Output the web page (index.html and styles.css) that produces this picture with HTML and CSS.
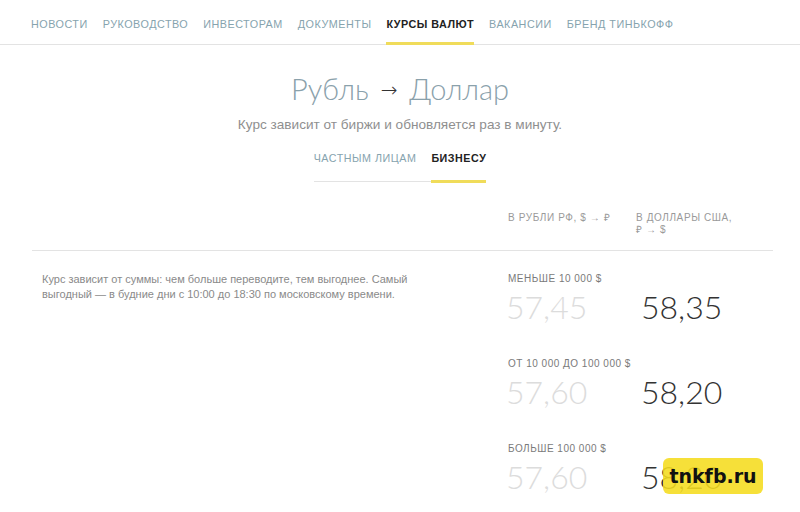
FILE: index.html
```html
<!DOCTYPE html>
<html lang="ru">
<head>
<meta charset="utf-8">
<link rel="stylesheet" href="styles.css">
</head>
<body>
<nav class="topnav">
  <a class="nav-item">Новости</a>
  <a class="nav-item">Руководство</a>
  <a class="nav-item">Инвесторам</a>
  <a class="nav-item">Документы</a>
  <a class="nav-item active">Курсы валют</a>
  <a class="nav-item">Вакансии</a>
  <a class="nav-item">Бренд Тинькофф</a>
</nav>
<header class="hero">
  <h1 class="title">Рубль <span class="arrow">→</span> Доллар</h1>
  <p class="subtitle">Курс зависит от биржи и обновляется раз в минуту.</p>
  <div class="tabs">
    <span class="tab">Частным лицам</span>
    <span class="tab active">Бизнесу</span>
  </div>
</header>
<section class="rates">
  <div class="rates-head">
    <div></div>
    <div class="col-head">В рубли РФ, $&nbsp;→&nbsp;₽</div>
    <div class="col-head">В доллары США, ₽&nbsp;→&nbsp;$</div>
  </div>
  <div class="rates-body">
    <p class="note">Курс зависит от суммы: чем больше переводите, тем выгоднее. Самый выгодный — в будние дни с 10:00 до 18:30 по московскому времени.</p>
    <div class="groups">
      <div class="group">
        <div class="group-label">Меньше 10 000 $</div>
        <div class="values"><span class="val light">57,45</span><span class="val dark">58,35</span></div>
      </div>
      <div class="group">
        <div class="group-label">От 10 000 до 100 000 $</div>
        <div class="values"><span class="val light">57,60</span><span class="val dark">58,20</span></div>
      </div>
      <div class="group">
        <div class="group-label">Больше 100 000 $</div>
        <div class="values"><span class="val light">57,60</span><span class="val dark">58,20</span></div>
      </div>
    </div>
  </div>
</section>
<div class="watermark">tnkfb.ru</div>
</body>
</html>
```
FILE: styles.css
```css
html, body {
  margin: 0;
  padding: 0;
  background: #fff;
  font-family: "Liberation Sans", Arial, sans-serif;
  overflow: hidden;
  height: 512px;
  position: relative;
}
.topnav {
  display: flex;
  gap: 15px;
  padding-left: 31px;
  height: 45px;
  border-bottom: 1px solid #e3e3e3;
  box-sizing: border-box;
}
.nav-item {
  display: flex;
  align-items: center;
  height: 45px;
  box-sizing: border-box;
  padding-top: 5px;
  font-size: 10.8px;
  letter-spacing: 0.5px;
  text-transform: uppercase;
  color: #86a3ae;
  border-bottom: 3px solid transparent;
  margin-bottom: -1px;
}
.nav-item.active {
  color: #222;
  font-weight: bold;
  border-bottom-color: #f0dc5a;
}
.hero {
  display: flex;
  flex-direction: column;
  align-items: center;
}
.title {
  margin: 27px 0 0;
  font-family: Lato, sans-serif;
  font-weight: 300;
  font-size: 29px;
  line-height: 34px;
  color: #8aa1ab;
}
.arrow {
  font-family: "DejaVu Sans", sans-serif;
  font-weight: 200;
  font-size: 20px;
  color: #333;
  vertical-align: 3px;
  margin: 0 4px;
}
.subtitle {
  margin: 10px 0 0;
  font-size: 13.6px;
  line-height: 16px;
  color: #8f8f8f;
}
.tabs {
  display: flex;
  gap: 15px;
  margin-top: 19px;
  border-bottom: 1px solid #e3e3e3;
}
.tab {
  font-size: 10.7px;
  letter-spacing: 0.55px;
  text-transform: uppercase;
  color: #86a3ae;
  padding: 0 0 16px;
  border-bottom: 3px solid transparent;
  margin-bottom: -2px;
}
.tab.active {
  color: #222;
  font-weight: bold;
  border-bottom-color: #f0dc5a;
}
.rates {
  margin: 30px 27px 0 32px;
}
.rates-head {
  display: grid;
  grid-template-columns: 476px 128px 112px;
  padding-bottom: 14px;
  border-bottom: 1px solid #e3e3e3;
}
.col-head {
  font-size: 10px;
  line-height: 12px;
  letter-spacing: 0.6px;
  text-transform: uppercase;
  color: #9a9a9a;
}
.rates-body {
  display: grid;
  grid-template-columns: 476px 1fr;
  padding-top: 22px;
}
.note {
  margin: -1px 0 0 10px;
  max-width: 372px;
  font-size: 11px;
  line-height: 15px;
  color: #8a8a8a;
}
.groups {
  display: flex;
  flex-direction: column;
  gap: 33px;
}
.group-label {
  font-size: 10px;
  line-height: 12px;
  letter-spacing: 0.5px;
  text-transform: uppercase;
  color: #7a7a7a;
}
.values {
  display: flex;
  margin: 4px 0 0 -2px;
  line-height: 36px;
  height: 36px;
}
.val {
  font-family: Lato, sans-serif;
  font-weight: 300;
  font-size: 32px;
}
.val.light {
  width: 135px;
  color: #dcdcdc;
}
.val.dark {
  color: #333;
}
.watermark {
  position: absolute;
  left: 663px;
  top: 458px;
  width: 100px;
  height: 36px;
  border-radius: 6px;
  background: rgba(245, 220, 30, 0.88);
  color: #111;
  font-family: "DejaVu Sans", sans-serif;
  font-weight: bold;
  font-size: 19px;
  display: flex;
  align-items: center;
  justify-content: center;
}
```
